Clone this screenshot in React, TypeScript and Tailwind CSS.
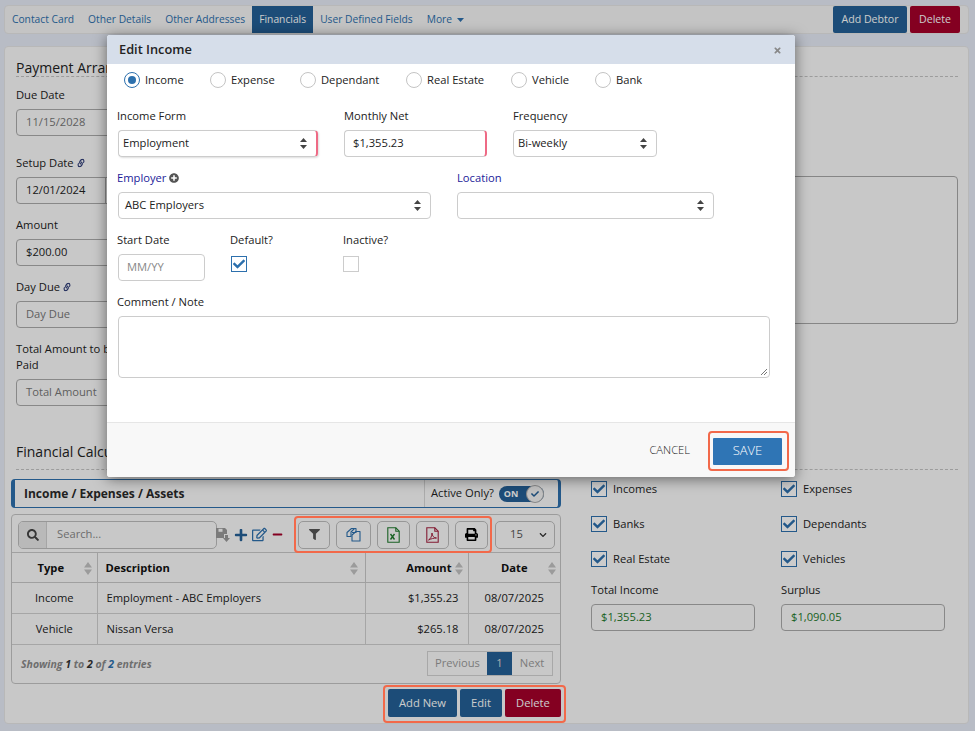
import React from "react";
import { FaCheck, FaFilter, FaLink, FaMinus, FaPlus, FaPlusCircle, FaPrint, FaRegEdit, FaSearch, FaTimes, FaChevronDown } from "react-icons/fa";

function Updown({ className = "" }: { className?: string }) {
  return (
    <svg width="7" height="11" viewBox="0 0 7 11" className={className}>
      <path d="M3.5 0 7 4H0z" fill="currentColor" />
      <path d="M3.5 11 0 7h7z" fill="currentColor" />
    </svg>
  );
}

function Sort({ className = "" }: { className?: string }) {
  return (
    <svg width="8" height="13" viewBox="0 0 8 13" className={`text-[#c2c2c2] ${className}`}>
      <path d="M4 0 8 5.500H0z" fill="currentColor" />
      <path d="M4 13 0 7.500h8z" fill="currentColor" />
    </svg>
  );
}

function CopyIcon() {
  return (
    <svg width="15" height="15" viewBox="0 0 15 15" fill="none" stroke="currentColor" strokeWidth="1.100">
      <path d="M5.500 1.500h3l-3.500 3.500v4.500H1V5.500z" strokeLinejoin="round" />
      <path d="M6 5.500h4v-4h-1.500" strokeLinejoin="round" />
      <path d="M10 4.500h4v9.500H6V8z" strokeLinejoin="round" />
    </svg>
  );
}

function DocIcon({ kind }: { kind: "x" | "pdf" }) {
  return (
    <svg width="13" height="16" viewBox="0 0 13 16" fill="none" stroke="currentColor" strokeWidth="1.100">
      <path d="M.8.800h8l3.400 3.400v11H.8z" />
      <path d="M8.800.8v3.400h3.400" />
      {kind === "x" ? (
        <path d="M3.500 7l4 5.500M7.500 7l-4 5.500" strokeWidth="1.400" />
      ) : (
        <path d="M2.500 13c2-1 3.500-4 3.500-7 0 3 2 5 4.500 5-2.500 0-5.500 .8-8 2z" strokeWidth="1" />
      )}
    </svg>
  );
}

function Check({ label, className = "" }: { label?: string; className?: string }) {
  return (
    <div className={`flex items-center gap-[6px] ${className}`}>
      <span className="w-[16px] h-[16px] border border-[#2d70ad] bg-white flex items-center justify-center text-[#2d70ad] text-[12px]">
        <FaCheck />
      </span>
      {label && <span>{label}</span>}
    </div>
  );
}

function Radio({ label, on, className = "" }: { label: string; on?: boolean; className?: string }) {
  return (
    <div className={`flex items-center gap-[5px] ${className}`}>
      <span className={`w-[16px] h-[16px] rounded-full border flex items-center justify-center ${on ? "border-[#2d70ad]" : "border-[#c4c4c4]"}`}>
        {on && <span className="w-[8px] h-[8px] rounded-full bg-[#2d70ad]" />}
      </span>
      <span>{label}</span>
    </div>
  );
}

function Field({ label, value, link, placeholder, divider, className = "" }: { label: React.ReactNode; value?: string; link?: boolean; placeholder?: boolean; divider?: boolean; className?: string }) {
  return (
    <div className={className}>
      <div className="leading-[16px] flex items-center gap-[3px]">
        <span>{label}</span>
        {link && <FaLink className="text-[8px] text-[#33407a] -rotate-12" />}
      </div>
      <div className={`mt-[6px] w-[150px] h-[27px] border border-[#ababab] rounded-[4px] pl-[9px] flex items-center relative ${placeholder ? "text-[#777]" : ""}`}>
        {value}
        {divider && <span className="absolute left-[88px] top-0 bottom-0 w-px bg-[#ababab]" />}
      </div>
    </div>
  );
}

function ModalSelect({ value, w, pad = "pl-[4px]", red }: { value?: string; w: string; pad?: string; red?: boolean }) {
  return (
    <div className={`${w} ml-px h-[27px] border border-[#cccccc] rounded-[4px] ${pad} pr-[9px] flex items-center justify-between ${red ? "border-r-2 border-r-[#ee6a85] shadow-[1px_1px_2px_#ddd]" : ""}`}>
      <span>{value}</span>
      <Updown className="text-[#444]" />
    </div>
  );
}

const head = "h-[30px] border-b border-r border-[#c9c9c9] font-bold text-[#111] pt-px";
const cell = "h-[31px] border-b border-r border-[#d0d0d0]";
const toolBtn = "h-[28px] border border-[#bdbdbd] rounded-[5px] flex items-center justify-center";

export default function App() {
  return (
    <div className="relative w-[977px] h-[731px] overflow-hidden bg-white text-[11.200px] text-[#222] font-['Open_Sans',sans-serif]">
      <div className="w-[975px] h-[731px] bg-[#e6ebf7] pl-[4px] pt-[5px]">
        {/* top nav */}
        <div className="w-[965px] h-[29px] bg-[#f5f5f5] border border-[#e6e6e6] rounded-[4px] flex items-center pl-[7px] text-[#2d70ad] text-[10.250px]">
          <span>Contact Card</span>
          <span className="ml-[14px]">Other Details</span>
          <span className="ml-[14px]">Other Addresses</span>
          <span className="ml-[7px] h-[27px] w-[61px] bg-[#245f96] text-white flex items-center justify-center">Financials</span>
          <span className="ml-[7px]">User Defined Fields</span>
          <span className="ml-[14px] flex items-center gap-[5px]">
            More
            <svg width="7" height="4" viewBox="0 0 7 4"><path d="M0 0h7L3.500 4z" fill="currentColor" /></svg>
          </span>
          <div className="ml-auto mr-[8px] flex gap-[3px] text-white text-[10.600px]">
            <span className="w-[74px] h-[27px] bg-[#245f96] rounded-[2px] flex items-center justify-center">Add Debtor</span>
            <span className="w-[50px] h-[27px] bg-[#a5002a] rounded-[2px] flex items-center justify-center">Delete</span>
          </div>
        </div>

        {/* main panel */}
        <div className="mt-[12px] w-[965px] h-[678px] bg-[#fbfbfb] border border-[#e6e6e6] rounded-[4px] flex pl-[6px]">
          {/* left column */}
          <div className="w-[550px] shrink-0">
            <div className="ml-[5px] h-[30px] border-b border-dashed border-[#c4c4c4] text-[14px] leading-[16px] flex items-end whitespace-nowrap">Payment Arrangement</div>
            <div className="ml-[5px]">
              <Field className="mt-[10px]" label="Due Date" value="11/15/2028" placeholder />
              <Field className="mt-[19px]" label="Setup Date" value="12/01/2024" link divider />
              <Field className="mt-[13px]" label="Amount" value="$200.00" />
              <Field className="mt-[13px]" label="Day Due" value="Day Due" link placeholder />
              <Field className="mt-[13px]" label={<>Total Amount to be<br />Paid</>} value="Total Amount" placeholder />
            </div>
            <div className="ml-[5px] mt-[35px] h-[29px] border-b border-dashed border-[#c4c4c4] text-[14px] flex items-start whitespace-nowrap">Financial Calculator</div>

            {/* title bar */}
            <div className="mt-[9px] h-[29px] border border-[#2d70ad] border-l-[4px] border-r-[3px] rounded-[4px] flex items-center">
              <span className="ml-[9px] font-bold text-[12px] text-[#2a2a2a]">Income / Expenses / Assets</span>
              <div className="ml-auto h-full w-[134px] border-l border-[#d6d6d6] flex items-center pl-[6px]">
                Active Only?
                <span className="relative ml-[5px] w-[45px] h-[16px] rounded-full bg-[#245f96] text-white text-[9px] font-bold flex items-center pl-[5px]">
                  ON
                  <span className="absolute right-0 top-[-1px] w-[18px] h-[18px] rounded-full bg-[#f2f2f2] border border-[#aaa] flex items-center justify-center text-[#245f96] text-[8px]"><FaCheck /></span>
                </span>
              </div>
            </div>

            {/* table panel */}
            <div className="mt-[6px] h-[170px] border border-[#c4c4c4] rounded-[4px] flex flex-col">
              <div className="h-[37px] flex items-center pl-[6px] pt-[2px] shrink-0">
                <div className="w-[199px] h-[28px] border border-[#bdbdbd] rounded-[5px] flex overflow-hidden">
                  <span className="w-[28px] bg-[#e8e8e8] border-r border-[#cfcfcf] flex items-center justify-center text-[#444] text-[12px]"><FaSearch /></span>
                  <span className="pl-[10px] flex items-center text-[#888]">Search...</span>
                </div>
                <svg width="14" height="14" viewBox="0 0 14 14" className="text-[#9a9a9a] ml-[-1px]">
                  <path d="M0 0h9l2 2v4H8v4H0z" fill="currentColor" />
                  <path d="M9 7h3v3h2l-3.500 4L7 10h2z" fill="currentColor" />
                  <rect x="2.500" y="0.800" width="4" height="3" fill="#fbfbfb" />
                </svg>
                <FaPlus className="ml-[4px] text-[#245f96] text-[14px]" />
                <FaRegEdit className="ml-[4px] text-[#2d70ad] text-[15px]" />
                <FaMinus className="ml-[5px] text-[#a5002a] text-[11px]" />
                <div className="ml-[15px] flex gap-[6px] items-center">
                  <span className={`w-[32px] text-[#555] text-[11px] ${toolBtn}`}><FaFilter /></span>
                  <span className={`w-[35px] text-[#2d70ad] ${toolBtn}`}><CopyIcon /></span>
                  <span className={`w-[33px] text-[#1f7a2c] ${toolBtn}`}><DocIcon kind="x" /></span>
                  <span className={`w-[33px] text-[#a5223f] ${toolBtn}`}><DocIcon kind="pdf" /></span>
                  <span className={`w-[33px] text-[#000] text-[13px] ${toolBtn}`}><FaPrint /></span>
                </div>
                <div className="ml-[7px] w-[60px] h-[28px] border border-[#bdbdbd] rounded-[5px] flex items-center justify-between pl-[14px] pr-[7px] text-[#555]">
                  15 <FaChevronDown className="text-[8px] text-[#333]" />
                </div>
              </div>
              <table className="w-full table-fixed border-collapse border-t border-[#c9c9c9] shrink-0">
                <colgroup>
                  <col className="w-[85px]" />
                  <col className="w-[268px]" />
                  <col className="w-[103px]" />
                  <col />
                </colgroup>
                <thead>
                  <tr>
                    <th className={head}><div className="relative text-center pr-[7px]">Type<Sort className="absolute right-[5px] top-[2px]" /></div></th>
                    <th className={`${head} text-left pl-[8px]`}><div className="relative">Description<Sort className="absolute right-[7px] top-[2px]" /></div></th>
                    <th className={`${head} text-right`}><div className="relative pr-[16px]">Amount<Sort className="absolute right-[5px] top-[2px]" /></div></th>
                    <th className="h-[30px] border-b border-[#c9c9c9] font-bold text-[#111] pt-px"><div className="relative text-center">Date<Sort className="absolute right-[4px] top-[2px]" /></div></th>
                  </tr>
                </thead>
                <tbody>
                  <tr>
                    <td className={`${cell} text-center`}>Income</td>
                    <td className={`${cell} pl-[9px]`}>Employment - ABC Employers</td>
                    <td className={`${cell} text-right pr-[9px]`}>$1,355.23</td>
                    <td className="h-[31px] border-b border-[#d0d0d0] text-center">08/07/2025</td>
                  </tr>
                  <tr>
                    <td className={`${cell} text-center`}>Vehicle</td>
                    <td className={`${cell} pl-[9px]`}>Nissan Versa</td>
                    <td className={`${cell} text-right pr-[9px]`}>$265.18</td>
                    <td className="h-[31px] border-b border-[#d0d0d0] text-center">08/07/2025</td>
                  </tr>
                </tbody>
              </table>
              <div className="flex-1 flex items-center justify-between pl-[9px] pr-[7px] pb-[1px]">
                <span className="italic font-bold text-[10.500px] text-[#8a8a8a] pt-[2px]">Showing <span className="text-[#333]">1</span> to <span className="text-[#333]">2</span> of <span className="text-[#2d70ad]">2</span> entries</span>
                <div className="h-[25px] flex border border-[#d2d2d2] text-[#9a9a9a]">
                  <span className="w-[59px] flex items-center justify-center">Previous</span>
                  <span className="w-[25px] bg-[#245f96] text-[#ddd] flex items-center justify-center">1</span>
                  <span className="w-[40px] flex items-center justify-center">Next</span>
                </div>
              </div>
            </div>

            {/* action buttons */}
            <div className="mt-[5px] flex justify-end gap-[3px] text-white">
              <span className="w-[69px] h-[28px] bg-[#245f96] rounded-[2px] flex items-center justify-center">Add New</span>
              <span className="w-[42px] h-[28px] bg-[#245f96] rounded-[2px] flex items-center justify-center">Edit</span>
              <span className="w-[56px] h-[28px] bg-[#a5002a] rounded-[2px] flex items-center justify-center">Delete</span>
            </div>
          </div>

          {/* right column */}
          <div className="ml-[18px] w-[379px] shrink-0">
            <div className="h-[30px] border-b border-dashed border-[#c4c4c4]" />
            <div className="mt-[99px] h-[148px] border border-[#a8a8a8] rounded-[4px]" />
            <div className="h-[146px] border-b border-dashed border-[#c4c4c4]" />
            <div className="mt-[11px] ml-[12px] grid grid-cols-[190px_1fr] gap-y-[18px]">
              <Check label="Incomes" />
              <Check label="Expenses" />
              <Check label="Banks" />
              <Check label="Dependants" />
              <Check label="Real Estate" />
              <Check label="Vehicles" />
            </div>
            <div className="mt-[15px] ml-[12px] grid grid-cols-[190px_1fr]">
              <div>
                <div className="leading-[16px]">Total Income</div>
                <div className="mt-[6px] w-[164px] h-[27px] border border-[#ababab] rounded-[4px] pl-[9px] flex items-center text-[#1f7a2c]">$1,355.23</div>
              </div>
              <div>
                <div className="leading-[16px]">Surplus</div>
                <div className="mt-[6px] w-[164px] h-[27px] border border-[#ababab] rounded-[4px] pl-[9px] flex items-center text-[#1f7a2c]">$1,090.05</div>
              </div>
            </div>
          </div>
        </div>
      </div>

      {/* backdrop */}
      <div className="absolute inset-y-0 left-0 w-[975px] bg-black/20" />

      {/* modal */}
      <div className="absolute left-[107px] top-[35px] w-[688px] h-[442px] bg-white rounded-[3px] shadow-[0_2px_14px_rgba(0,0,0,0.5)] overflow-hidden flex flex-col">
        <div className="h-[29px] bg-[#d6deea] flex items-center justify-between pl-[12px] pr-[13px] pt-px shrink-0">
          <span className="font-semibold text-[12.800px] text-[#222]">Edit Income</span>
          <FaTimes className="text-[#888] text-[9px]" />
        </div>
        <div className="flex-1 pl-[10px]">
          <div className="flex items-center h-[16px] mt-[8px] pl-[7px]">
            <Radio label="Income" on className="w-[86px]" />
            <Radio label="Expense" className="w-[90px]" />
            <Radio label="Dependant" className="w-[106px]" />
            <Radio label="Real Estate" className="w-[105px]" />
            <Radio label="Vehicle" className="w-[84px]" />
            <Radio label="Bank" />
          </div>
          <div className="mt-[20px] flex">
            <div className="w-[227px]">
              <div className="leading-[16px]">Income Form</div>
              <div className="mt-[6px]"><ModalSelect value="Employment" w="w-[200px]" red /></div>
            </div>
            <div className="w-[169px]">
              <div className="leading-[16px]">Monthly Net</div>
              <div className="mt-[6px] w-[143px] h-[27px] border border-[#cccccc] border-r-2 border-r-[#ee6a85] rounded-[4px] pl-[8px] flex items-center">$1,355.23</div>
            </div>
            <div>
              <div className="leading-[16px]">Frequency</div>
              <div className="mt-[6px] -ml-px"><ModalSelect value="Bi-weekly" w="w-[144px]" /></div>
            </div>
          </div>
          <div className="mt-[13px] flex">
            <div className="w-[340px]">
              <div className="leading-[16px] flex items-center gap-[3px] text-[#1c1c99]">Employer <FaPlusCircle className="text-[#555] text-[10px]" /></div>
              <div className="mt-[6px]"><ModalSelect value="ABC Employers" w="w-[313px]" pad="pl-[6px]" /></div>
            </div>
            <div>
              <div className="leading-[16px] text-[#1c1c99]">Location</div>
              <div className="mt-[6px] -ml-px"><ModalSelect w="w-[257px]" /></div>
            </div>
          </div>
          <div className="mt-[13px] flex">
            <div className="w-[113px]">
              <div className="leading-[16px]">Start Date</div>
              <div className="ml-px mt-[6px] w-[87px] h-[27px] border border-[#cccccc] rounded-[4px] pl-[8px] flex items-center text-[#888]">MM/YY</div>
            </div>
            <div className="w-[113px]">
              <div className="leading-[16px]">Default?</div>
              <Check className="mt-[8px] ml-px" />
            </div>
            <div>
              <div className="leading-[16px]">Inactive?</div>
              <span className="mt-[8px] block w-[16px] h-[16px] border border-[#ccc]" />
            </div>
          </div>
          <div className="mt-[13px] leading-[16px]">Comment / Note</div>
          <div className="relative ml-px mt-[6px] w-[652px] h-[62px] border border-[#cccccc] rounded-[4px]">
            <svg width="8" height="8" viewBox="0 0 8 8" className="absolute right-[1px] bottom-[1px] text-[#777]">
              <path d="M1 7 7 1M4 7l3-3" stroke="currentColor" fill="none" />
            </svg>
          </div>
        </div>
        <div className="h-[55px] bg-[#f8f8f8] border-t border-[#e6e6e6] flex items-center justify-end pr-[13px] shrink-0">
          <span className="text-[#222] font-light">CANCEL</span>
          <span className="ml-[23px] mt-[2px] w-[69px] h-[27px] bg-[#2f75b5] text-white text-[13px] font-light flex items-center justify-center rounded-[1px]">SAVE</span>
        </div>
      </div>

      {/* annotation outlines */}
      <div className="absolute left-[708px] top-[431px] w-[81px] h-[40px] border-2 border-[#f2694a] rounded-[4px]" />
      <div className="absolute left-[294px] top-[516px] w-[198px] h-[37px] border-2 border-[#f2694a] rounded-[4px]" />
      <div className="absolute left-[383px] top-[685px] w-[183px] h-[38px] border-2 border-[#f2694a] rounded-[4px]" />
    </div>
  );
}
